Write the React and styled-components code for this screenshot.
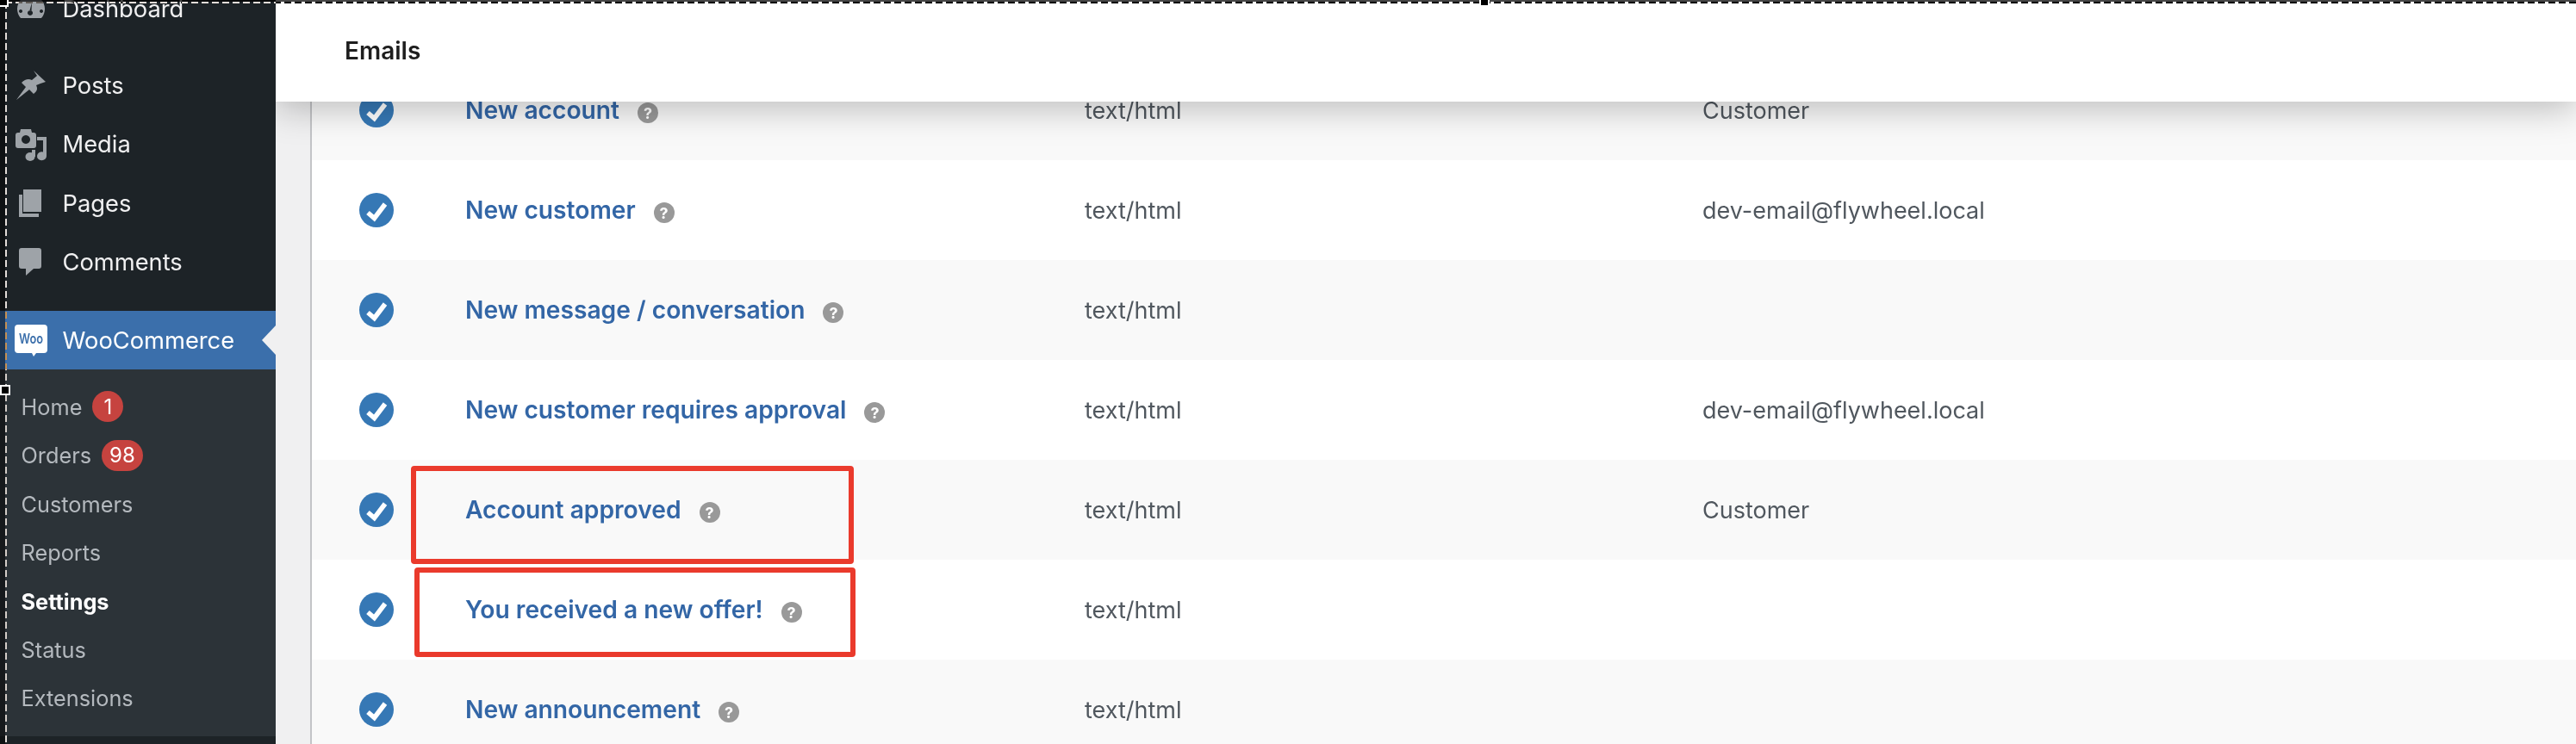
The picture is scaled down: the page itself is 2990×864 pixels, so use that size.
import React from 'react';
import styled, { createGlobalStyle } from "styled-components";


const GlobalStyle = createGlobalStyle`
    html, body {
        margin: 0;
        padding: 0;
        background: #f0f0f1;
    }
    body {
        font-family: Inter, "Liberation Sans", sans-serif;
    }
`;

const Page = styled.div`
    position: relative;
    display: flex;
    width: 2990px;
    height: 864px;
    overflow: hidden;
`;

/* ---- admin menu ---- */

const Sidebar = styled.nav`
    position: relative;
    z-index: 3;
    flex: 0 0 320px;
    background: #1d2327;
`;

const MenuList = styled.div`
    margin-top: -24px;
    display: flex;
    flex-direction: column;
`;

const MenuItem = styled.div`
    position: relative;
    display: flex;
    align-items: center;
    gap: 16.5px;
    height: 68.3px;
    padding-left: 16px;
    margin-top: ${props => props.$gap || 0}px;
    font-size: 27.3px;
    color: ${props => props.$active ? "#ffffff" : "#f0f0f1"};
    background: ${props => props.$active ? "#3b6fab" : "transparent"};
`;

const MenuIcon = styled.svg`
    flex: 0 0 40px;
    width: 40px;
    height: 40px;
    fill: #9ea3a8;
`;

const Notch = styled.span`
    position: absolute;
    right: 0;
    top: 17px;
    width: 0;
    height: 0;
    border-top: 17px solid transparent;
    border-bottom: 17px solid transparent;
    border-right: 16px solid #f0f0f1;
`;

const SubMenu = styled.div`
    display: flex;
    flex-direction: column;
    padding: 15px 0 16px 24.5px;
    background: #2c3338;
`;

const SubItem = styled.div`
    display: flex;
    align-items: center;
    gap: 12px;
    height: 56.4px;
    font-size: 25.3px;
    font-weight: ${props => props.$current ? 700 : 400};
    color: ${props => props.$current ? "#ffffff" : "#b4b9be"};
`;

const CountBadge = styled.span`
    display: inline-flex;
    align-items: center;
    justify-content: center;
    min-width: 36px;
    height: 36px;
    padding: ${props => props.$wide ? "0 9px" : "0"};
    box-sizing: border-box;
    border-radius: 18px;
    background: #c6433f;
    color: #ffffff;
    font-size: 24px;
`;

/* ---- settings content ---- */

const Main = styled.main`
    position: relative;
    flex: 1;
    padding: 70px 0 0 40px;
    background: #f0f0f1;
`;

const TopBar = styled.header`
    position: absolute;
    z-index: 2;
    top: 0;
    left: 0;
    right: 0;
    height: 118px;
    padding-left: 80px;
    display: flex;
    align-items: center;
    box-sizing: border-box;
    background: #ffffff;
    box-shadow: 0 8px 40px rgba(0, 0, 0, 0.25);
`;

const TopBarTitle = styled.h1`
    margin: 0;
    font-size: 28px;
    font-weight: 600;
    color: #1e1e1e;
`;

const EmailTable = styled.div`
    border-left: 2px solid #c3c4c7;
`;

const EmailRow = styled.div`
    display: grid;
    grid-template-columns: 178px 719px 717px 1fr;
    align-items: center;
    height: 116px;
    background: ${props => props.$striped ? "#f9f9f9" : "#ffffff"};
`;

const CheckCell = styled.div`
    padding-left: 55px;
    display: flex;
`;

const CheckIcon = styled.svg`
    display: block;
    width: 40px;
    height: 40px;
`;

const TitleCell = styled.div`
    position: relative;
    display: flex;
    align-items: center;
    gap: 21px;
    height: 100%;
`;

const EmailLink = styled.a`
    font-size: 28.2px;
    font-weight: 600;
    color: #3366a6;
`;

const HelpTip = styled.span`
    display: inline-flex;
    align-items: center;
    justify-content: center;
    width: 24px;
    height: 24px;
    margin-top: 6px;
    border-radius: 50%;
    background: #999999;
    color: #ffffff;
    font-size: 18px;
    font-weight: 700;
`;

const PlainCell = styled.div`
    font-size: 27px;
    color: #50575e;
`;

const RedMarker = styled.span`
    position: absolute;
    z-index: 1;
    left: ${props => props.$left}px;
    top: ${props => props.$top}px;
    width: ${props => props.$width}px;
    height: ${props => props.$height}px;
    box-sizing: border-box;
    border: 6px solid #ea3a2c;
    border-radius: 4px;
`;

/* ---- screenshot tool selection drawn over the page ---- */

const DimTop = styled.div`
    position: absolute;
    z-index: 5;
    top: 0;
    left: 0;
    right: 0;
    height: 2px;
    background: rgba(0, 0, 0, 0.72);
`;

const DimLeft = styled.div`
    position: absolute;
    z-index: 5;
    top: 2px;
    left: 0;
    bottom: 0;
    width: 6px;
    background: rgba(0, 0, 0, 0.5);
`;

const MarqueeTop = styled.div`
    position: absolute;
    z-index: 6;
    top: 2px;
    left: 6px;
    right: 0;
    height: 2px;
    mix-blend-mode: difference;
    background: repeating-linear-gradient(90deg, #ffffff 0 8px, transparent 8px 12px);
`;

const MarqueeLeft = styled.div`
    position: absolute;
    z-index: 6;
    top: 2px;
    left: 6px;
    bottom: 0;
    width: 2px;
    mix-blend-mode: difference;
    background: repeating-linear-gradient(180deg, #ffffff 0 8px, transparent 8px 12px);
`;

const Handle = styled.div`
    position: absolute;
    z-index: 7;
    left: ${props => props.$left}px;
    top: ${props => props.$top}px;
    width: 8px;
    height: 8px;
    background: #000000;
    border: 2px solid #ffffff;
`;


const DashboardGlyph = () => (
    <MenuIcon viewBox="0 0 40 40">
        <path fillRule="evenodd" d="M8 31 A16 16 0 1 1 32 31 Z M8 21 a2 2 0 1 0 .01 0 Z M32 21 a2 2 0 1 0 .01 0 Z M19 22 a3 3 0 1 0 .01 0 Z M21 13 L18.500 22 L20.500 22.500 Z" />
    </MenuIcon>
);

const PinGlyph = () => (
    <MenuIcon viewBox="0 0 40 40">
        <path d="M3 37 L14 22 L9 17 C13 13 17 12 21 14 L27 9 L23 3 L37 16 L31 18 L26 20 C28 24 27 27 23 30 L18 25 Z" />
    </MenuIcon>
);

const MediaGlyph = () => (
    <MenuIcon viewBox="0 0 40 40">
        <path fillRule="evenodd" d="M8 2 H20 L21 6 H23 Q26 6 26 9 V21 Q26 24 23 24 H5 Q2 24 2 21 V9 Q2 6 5 6 H7 Z M14 9 a5 5 0 1 0 .01 0 Z" />
        <path d="M27 11 H38 V33 A5.500 5 0 1 1 34 28.500 V15 H27 Z" />
        <ellipse cx="19" cy="34" rx="5.500" ry="5" />
        <rect x="21" y="26" width="4" height="8" />
    </MenuIcon>
);

const PagesGlyph = () => (
    <MenuIcon viewBox="0 0 40 40">
        <rect x="11" y="4" width="21" height="26" />
        <path d="M6 10 H10 V32 H29 V36 H6 Z" />
    </MenuIcon>
);

const CommentsGlyph = () => (
    <MenuIcon viewBox="0 0 40 40">
        <path d="M9 4 H29 Q32 4 32 7 V25 Q32 28 29 28 H23 L14 36 V28 H9 Q6 28 6 25 V7 Q6 4 9 4 Z" />
    </MenuIcon>
);

const WooGlyph = () => (
    <MenuIcon viewBox="0 0 40 40">
        <path fill="#ffffff" d="M5 2 H35 Q39 2 39 6 V31 Q39 35 35 35 H26 L23 39 L21 35 H5 Q1 35 1 31 V6 Q1 2 5 2 Z" />
        <text x="20" y="24" textAnchor="middle" textLength="28" lengthAdjust="spacingAndGlyphs" fontSize="16" fontWeight="600" fontFamily="Inter, sans-serif" fill="#3b6fab">Woo</text>
    </MenuIcon>
);

const CheckMark = () => (
    <CheckIcon viewBox="0 0 40 40">
        <circle cx="20" cy="20" r="20" fill="#3678b5" />
        <path d="M10 23 L17.500 29.500 L30 13" fill="none" stroke="#ffffff" strokeWidth="5.500" />
    </CheckIcon>
);


const topLevelItems = [
    { label: "Dashboard", icon: <DashboardGlyph /> },
    { label: "Posts", icon: <PinGlyph />, gap: 21 },
    { label: "Media", icon: <MediaGlyph /> },
    { label: "Pages", icon: <PagesGlyph /> },
    { label: "Comments", icon: <CommentsGlyph /> }
];

const subItems = [
    { label: "Home", badge: "1" },
    { label: "Orders", badge: "98" },
    { label: "Customers" },
    { label: "Reports" },
    { label: "Settings", current: true },
    { label: "Status" },
    { label: "Extensions" }
];

const emails = [
    { title: "New account", recipient: "Customer" },
    { title: "New customer", recipient: "dev-email@flywheel.local" },
    { title: "New message / conversation" },
    { title: "New customer requires approval", recipient: "dev-email@flywheel.local" },
    { title: "Account approved", recipient: "Customer", marker: { left: -63, top: 7, width: 514, height: 114 } },
    { title: "You received a new offer!", marker: { left: -59, top: 9, width: 512, height: 104 } },
    { title: "New announcement" }
];


const App = () => {
    return (
        <Page>
            <GlobalStyle />
            <Sidebar>
                <MenuList>
                    {topLevelItems.map(item => (
                        <MenuItem key={item.label} $gap={item.gap}>
                            {item.icon}
                            {item.label}
                        </MenuItem>
                    ))}
                    <MenuItem $active $gap={22.5}>
                        <WooGlyph />
                        WooCommerce
                        <Notch />
                    </MenuItem>
                </MenuList>
                <SubMenu>
                    {subItems.map(item => (
                        <SubItem key={item.label} $current={item.current}>
                            {item.label}
                            {item.badge && <CountBadge $wide={item.badge.length > 1}>{item.badge}</CountBadge>}
                        </SubItem>
                    ))}
                </SubMenu>
            </Sidebar>
            <Main>
                <TopBar>
                    <TopBarTitle>Emails</TopBarTitle>
                </TopBar>
                <EmailTable>
                    {emails.map((email, i) => (
                        <EmailRow key={email.title} $striped={i % 2 === 0}>
                            <CheckCell><CheckMark /></CheckCell>
                            <TitleCell>
                                <EmailLink>{email.title}</EmailLink>
                                <HelpTip>?</HelpTip>
                                {email.marker && (
                                    <RedMarker
                                        $left={email.marker.left}
                                        $top={email.marker.top}
                                        $width={email.marker.width}
                                        $height={email.marker.height}
                                    />
                                )}
                            </TitleCell>
                            <PlainCell>text/html</PlainCell>
                            <PlainCell>{email.recipient}</PlainCell>
                        </EmailRow>
                    ))}
                </EmailTable>
            </Main>
            <DimTop />
            <DimLeft />
            <MarqueeTop />
            <MarqueeLeft />
            <Handle $left={-2} $top={-4} />
            <Handle $left={0} $top={447} />
            <Handle $left={1717} $top={-4} />
        </Page>
    );
};

export default App;
